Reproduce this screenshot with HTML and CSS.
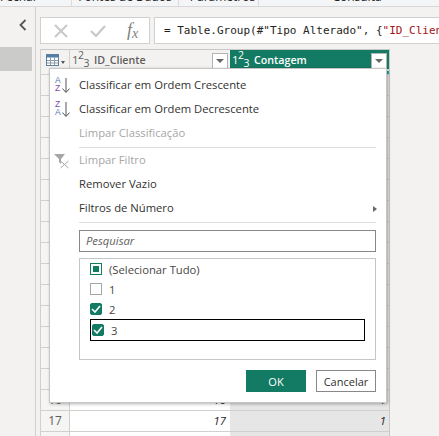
FILE: index.html
```html
<!DOCTYPE HTML>
<html>
<head>
    <meta charset="utf-8">
    <title>Filtro</title>
    <link rel="stylesheet" href="styles.css">
</head>
<body>
<div class="ribbon">
    <div class="group group1"><span class="label">Fechar</span></div>
    <div class="group group2"><span class="label">Fontes de Dados</span></div>
    <div class="group group3"><span class="label">Parâmetros</span></div>
    <div class="group group4"><span class="label">Consulta</span></div>
</div>
<div class="main">
    <aside class="side">
        <svg class="collapse" width="8" height="12" viewBox="0 0 8 12"><path d="M6.5 1 L1.5 6 L6.5 11" fill="none" stroke="#555" stroke-width="1.8"/></svg>
        <div class="side-sel"></div>
    </aside>
    <section class="work">
        <div class="formula">
            <div class="fx-box">
                <svg width="16" height="16" viewBox="0 0 16 16"><path d="M2 2 L14 14 M14 2 L2 14" stroke="#c8c8c8" stroke-width="2"/></svg>
                <svg width="16" height="16" viewBox="0 0 16 16"><path d="M1 8 L6 13 L15 3" fill="none" stroke="#c8c8c8" stroke-width="2.2"/></svg>
                <span class="fx">f<sub>x</sub></span>
            </div>
            <div class="fx-text">= Table.Group(#"Tipo Alterado", {<span class="str">"ID_Clien</span></div>
        </div>
        <div class="grid">
            <div class="head">
                <div class="corner">
                    <svg width="16" height="12" viewBox="0 0 16 12"><rect x="0.5" y="0.5" width="12" height="11" fill="#fff" stroke="#5d7f9c"/><path d="M0 1 H13 V3.5 H0 Z" fill="#4f7fa8"/><path d="M4.5 3 V11 M8.5 3 V11 M1 6.5 H12 M1 9 H12" stroke="#8a9bad" stroke-width="1"/></svg>
                    <svg class="caret-small" width="4" height="3" viewBox="0 0 4 3"><path d="M0 0 H4 L2 3 Z" fill="#555"/></svg>
                </div>
                <div class="col col1">
                    <span class="type">1<sup>2</sup><sub>3</sub></span>
                    <span class="col-name">ID_Cliente</span>
                    <span class="drop"><i></i></span>
                </div>
                <div class="col col2">
                    <span class="type">1<sup>2</sup><sub>3</sub></span>
                    <span class="col-name">Contagem</span>
                    <span class="drop"><i></i></span>
                </div>
            </div>
            <div class="rows">
                <div class="row quality"><span class="num"></span><span class="c1"></span><span class="c2"></span></div>
                <div class="row"><span class="num"></span><span class="c1"></span><span class="c2"></span></div>
                <div class="row"><span class="num"></span><span class="c1"></span><span class="c2"></span></div>
                <div class="row"><span class="num"></span><span class="c1"></span><span class="c2"></span></div>
                <div class="row"><span class="num"></span><span class="c1"></span><span class="c2"></span></div>
                <div class="row"><span class="num"></span><span class="c1"></span><span class="c2"></span></div>
                <div class="row"><span class="num"></span><span class="c1"></span><span class="c2"></span></div>
                <div class="row"><span class="num"></span><span class="c1"></span><span class="c2"></span></div>
                <div class="row"><span class="num"></span><span class="c1"></span><span class="c2"></span></div>
                <div class="row"><span class="num"></span><span class="c1"></span><span class="c2"></span></div>
                <div class="row"><span class="num"></span><span class="c1"></span><span class="c2"></span></div>
                <div class="row"><span class="num"></span><span class="c1"></span><span class="c2"></span></div>
                <div class="row"><span class="num"></span><span class="c1"></span><span class="c2"></span></div>
                <div class="row"><span class="num"></span><span class="c1"></span><span class="c2"></span></div>
                <div class="row"><span class="num"></span><span class="c1"></span><span class="c2"></span></div>
                <div class="row"><span class="num"></span><span class="c1"></span><span class="c2"></span></div>
                <div class="row"><span class="num">16</span><span class="c1">16</span><span class="c2">1</span></div>
                <div class="row"><span class="num">17</span><span class="c1">17</span><span class="c2">1</span></div>
                <div class="row"><span class="num"></span><span class="c1"></span><span class="c2"></span></div>
            </div>
        </div>
    </section>
</div>

<div class="menu">
    <div class="item">
        <svg class="ico" width="16" height="18" viewBox="0 0 16 18"><text x="1" y="7" class="az a">A</text><text x="1" y="15" class="az z">Z</text><path d="M12 2 V16 M8.5 12.5 L12 16.5 L15.5 12.5" fill="none" stroke="#555" stroke-width="1"/></svg>
        Classificar em Ordem Crescente
    </div>
    <div class="item">
        <svg class="ico" width="16" height="18" viewBox="0 0 16 18"><text x="1" y="7" class="az z">Z</text><text x="1" y="15" class="az a">A</text><path d="M12 2 V16 M8.5 12.5 L12 16.5 L15.5 12.5" fill="none" stroke="#555" stroke-width="1"/></svg>
        Classificar em Ordem Decrescente
    </div>
    <div class="item off">Limpar Classificação</div>
    <div class="sep"></div>
    <div class="item off">
        <svg class="ico" width="16" height="18" viewBox="0 0 16 18"><path d="M0 3 H11 L7 8 V13 L5 11 V8 Z" fill="#a6a6a6"/><path d="M6.5 10 L14.5 17 M14.5 10 L6.5 17" stroke="#a6a6a6" stroke-width="1"/></svg>
        Limpar Filtro
    </div>
    <div class="item">Remover Vazio</div>
    <div class="item">Filtros de Número<svg class="more" width="4" height="6" viewBox="0 0 4 6"><path d="M0 0 L4 3 L0 6 Z" fill="#666"/></svg></div>
    <div class="sep"></div>
    <div class="search">Pesquisar</div>
    <div class="list">
        <div class="opt"><span class="box part"><i></i></span>(Selecionar Tudo)</div>
        <div class="opt"><span class="box"></span>1</div>
        <div class="opt"><span class="box on"><svg width="10" height="8" viewBox="0 0 10 8"><path d="M1 4 L4 7 L9 1" fill="none" stroke="#fff" stroke-width="1.6"/></svg></span>2</div>
        <div class="opt focus"><span class="box on"><svg width="10" height="8" viewBox="0 0 10 8"><path d="M1 4 L4 7 L9 1" fill="none" stroke="#fff" stroke-width="1.6"/></svg></span>3</div>
    </div>
    <div class="actions">
        <button class="btn ok">OK</button>
        <button class="btn cancel">Cancelar</button>
    </div>
</div>
</body>
</html>
```

FILE: styles.css
```css
html, body {
    margin: 0;
    height: 100%;
    overflow: hidden;
}
body {
    width: 439px;
    height: 436px;
    position: relative;
    background-color: #f3f2f1;
    font-family: "Open Sans", "Noto Sans", sans-serif;
    font-size: 11.25px;
    color: #252423;
}
.ribbon {
    display: flex;
    height: 6px;
    background-color: #f4f5f7;
    border-bottom: 1px solid #d8d8d8;
    overflow: hidden;
}
.group {
    height: 6px;
    box-sizing: border-box;
    border-right: 1px solid #dcdcdc;
    flex: none;
    white-space: nowrap;
    font-size: 12px;
    text-align: center;
    overflow: hidden;
}
.label {
    display: block;
    line-height: 0;
    margin-top: -3px;
}
.group1 {
    width: 72px;
    text-align: left;
}
.group2 {
    width: 107px;
}
.group3 {
    width: 80px;
    padding-left: 8px;
}
.group4 {
    width: 180px;
    border-right: none;
    padding-left: 16px;
}
.main {
    display: flex;
    height: 429px;
}
.side {
    width: 36px;
    box-sizing: border-box;
    border-right: 1px solid #d2d0ce;
    flex: none;
}
.collapse {
    display: block;
    margin: 12px 0 0 19px;
}
.side-sel {
    height: 24px;
    width: 32px;
    margin-top: 16px;
    background-color: #cbcbca;
}
.work {
    flex: 1;
    min-width: 0;
    padding: 10px 0 0 4px;
}
.formula {
    display: flex;
    gap: 4px;
    height: 27px;
}
.fx-box {
    width: 110px;
    border: 1px solid #d2d0ce;
    background-color: #fff;
    display: flex;
    align-items: center;
    gap: 21px;
    padding-left: 12px;
    box-sizing: border-box;
    flex: none;
}
.fx {
    font-family: "Liberation Serif", serif;
    font-style: italic;
    font-size: 18px;
    color: #808080;
}
.fx sub {
    font-size: 14px;
    vertical-align: -2px;
    line-height: 0;
}
.fx-text {
    flex: 1;
    min-width: 0;
    border: 1px solid #d2d0ce;
    border-right: none;
    background-color: #fff;
    font-family: "DejaVu Sans Mono", monospace;
    font-size: 11px;
    line-height: 25px;
    padding-left: 9px;
    white-space: nowrap;
    overflow: hidden;
}
.str {
    color: #a31515;
}
.grid {
    margin-top: 5px;
    width: 350px;
    box-sizing: border-box;
    border-left: 1px solid #d2d0ce;
    border-right: 1px solid #c8c8c8;
    background-color: #fff;
}
.head {
    display: flex;
    height: 19px;
    background-color: #f3f2f1;
    border-top: 1px solid #c8c8c8;
}
.corner {
    width: 29px;
    display: flex;
    align-items: center;
    padding-left: 5px;
    box-sizing: border-box;
    border-right: 1px solid #d2d0ce;
}
.caret-small {
    margin: 5px 0 0 -1px;
}
.col {
    display: flex;
    align-items: center;
    font-size: 10.7px;
    font-weight: 600;
    box-sizing: border-box;
    color: #605e5c;
    padding-left: 2px;
}
.col1 {
    width: 160px;
}
.col2 {
    width: 159px;
    background-color: #137a63;
    color: #fff;
}
.type {
    font-size: 11.5px;
    font-weight: 400;
    width: 22px;
    flex: none;
    line-height: 1;
    letter-spacing: -0.6px;
}
.type sup, .type sub {
    font-size: 10.5px;
    line-height: 0;
}
.col-name {
    flex: 1;
}
.drop {
    width: 16px;
    height: 16px;
    border: 1px solid #b4b4b4;
    background-color: #fff;
    display: flex;
    align-items: center;
    justify-content: center;
    box-sizing: border-box;
    margin: 3px 2px 0 0;
}
.drop i {
    border-left: 4px solid transparent;
    border-right: 4px solid transparent;
    border-top: 4px solid #666;
}
.row {
    display: flex;
    height: 21px;
    border-top: 1px solid #d2d0ce;
    box-sizing: border-box;
    font-style: italic;
}
.row.quality {
    height: 5px;
    border-top: none;
}
.quality .c2 {
    background-color: #14b1a0;
    border-top: 2px solid #e6e6e6;
}
.num {
    width: 29px;
    flex: none;
    box-sizing: border-box;
    border-right: 1px solid #d2d0ce;
    background-color: #f5f5f4;
    text-align: center;
    font-style: normal;
    color: #605e5c;
    font-size: 12px;
    line-height: 20px;
}
.c1 {
    width: 160px;
    text-align: right;
    padding-right: 4px;
    box-sizing: border-box;
    line-height: 20px;
}
.c2 {
    width: 159px;
    text-align: right;
    padding-right: 3px;
    box-sizing: border-box;
    background-color: #e6e6e6;
    line-height: 20px;
}
.menu {
    position: absolute;
    left: 49px;
    top: 68px;
    width: 338px;
    height: 335px;
    box-sizing: border-box;
    background-color: #fff;
    border: 1px solid #c8c6c4;
    box-shadow: 1px 1px 3px rgba(0, 0, 0, 0.3);
    padding-top: 4px;
}
.item {
    position: relative;
    height: 24px;
    line-height: 24px;
    padding-left: 29px;
    color: #323130;
}
.off {
    color: #a6a6a6;
}
.ico {
    position: absolute;
    left: 4px;
    top: 3px;
}
.az {
    font-size: 8.5px;
    font-family: "Liberation Sans", sans-serif;
}
.az.a {
    fill: #4a78b0;
}
.az.z {
    fill: #7b4fa6;
}
.more {
    position: absolute;
    right: 9px;
    top: 10px;
}
.sep {
    height: 1px;
    background-color: #dedede;
    margin: 2px 10px 0 29px;
}
.search {
    margin: 7px 10px 0 29px;
    height: 22px;
    line-height: 20px;
    box-sizing: border-box;
    border: 1px solid #8a8886;
    padding-left: 6px;
    font-style: italic;
    color: #605e5c;
}
.list {
    margin: 6px 10px 0 29px;
    height: 102px;
    box-sizing: border-box;
    border: 1px solid #c8c6c4;
}
.opt {
    height: 20px;
    display: flex;
    align-items: center;
    gap: 7px;
    padding-left: 10px;
    color: #484644;
}
.focus {
    border: 1px solid #000;
    height: 22px;
    box-sizing: border-box;
    margin: 0 10px 0 10px;
    gap: 7px;
    padding-left: 1px;
}
.box {
    width: 12px;
    height: 12px;
    box-sizing: border-box;
    border: 1px solid #a6a6a6;
    display: flex;
    align-items: center;
    justify-content: center;
}
.box.on {
    background-color: #137a63;
    border-color: #137a63;
    border-radius: 2px;
}
.box.part {
    border-color: #137a63;
}
.box.part i {
    width: 6px;
    height: 6px;
    background-color: #137a63;
}
.actions {
    display: flex;
    justify-content: flex-end;
    gap: 10px;
    margin: 10px 10px 0 0;
}
.btn {
    height: 22px;
    width: 60px;
    font-family: inherit;
    font-size: 11px;
    box-sizing: border-box;
    padding: 0;
}
.ok {
    background-color: #137a63;
    border: none;
    color: #fff;
}
.cancel {
    background-color: #fff;
    border: 1px solid #8a8886;
    color: #323130;
}
```
